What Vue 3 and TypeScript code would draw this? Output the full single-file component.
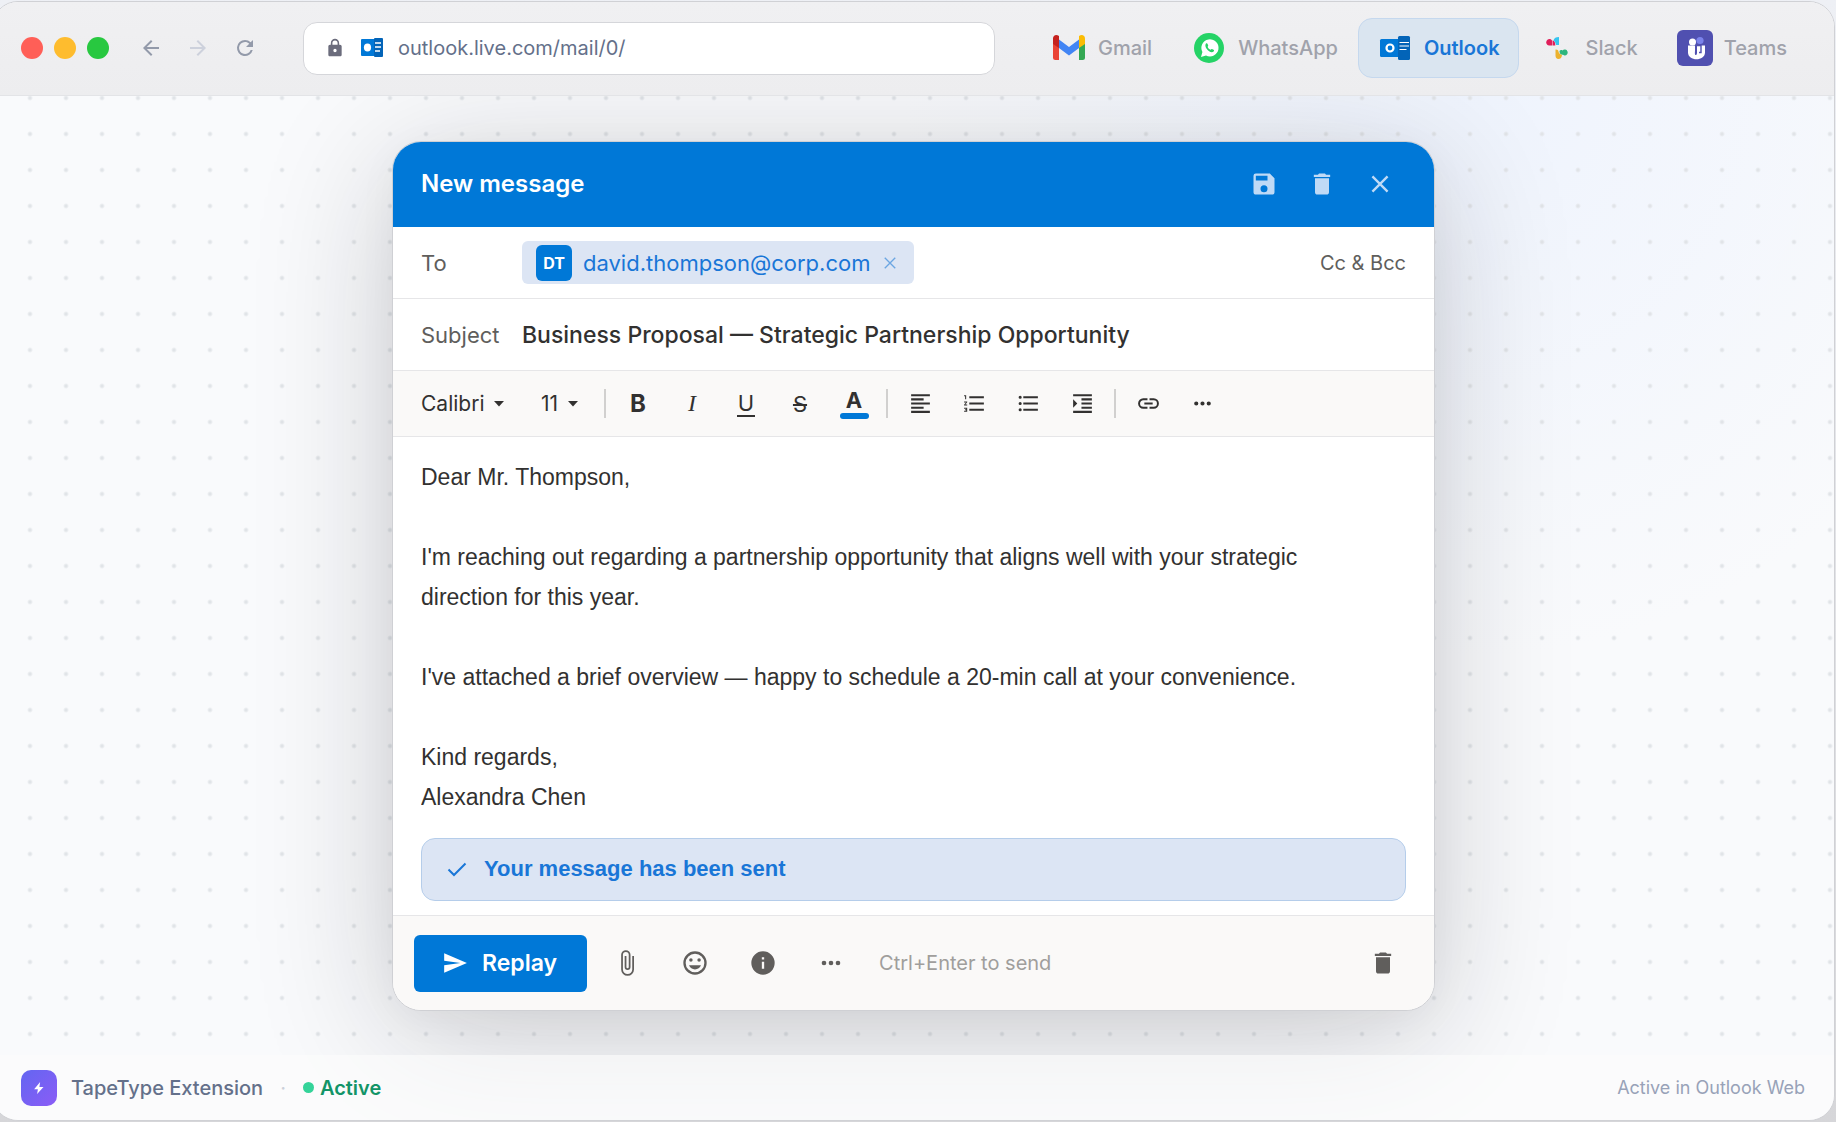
<script setup lang="ts">
import { ref } from 'vue'

interface Tab {
  id: string
  name: string
}

const tabs: Tab[] = [
  { id: 'gmail', name: 'Gmail' },
  { id: 'whatsapp', name: 'WhatsApp' },
  { id: 'outlook', name: 'Outlook' },
  { id: 'slack', name: 'Slack' },
  { id: 'teams', name: 'Teams' },
]
const activeTab = ref('outlook')

const icons: Record<string, string> = {
  back: 'M20 11H7.83l5.59-5.59L12 4l-8 8 8 8 1.41-1.41L7.83 13H20z',
  forward: 'M12 4l-1.41 1.41L16.17 11H4v2h12.17l-5.58 5.59L12 20l8-8z',
  reload: 'M17.65 6.35A7.96 7.96 0 0 0 12 4a8 8 0 1 0 7.73 10h-2.08A6 6 0 1 1 12 6c1.66 0 3.14.69 4.22 1.78L13 11h7V4z',
  lock: 'M18 8h-1V6c0-2.76-2.24-5-5-5S7 3.24 7 6v2H6c-1.1 0-2 .9-2 2v10c0 1.1.9 2 2 2h12c1.1 0 2-.9 2-2V10c0-1.1-.9-2-2-2zm-6 9a2 2 0 1 1 0-4 2 2 0 0 1 0 4zm3.1-9H8.9V6a3.1 3.1 0 0 1 6.2 0z',
  save: 'M17 3H5a2 2 0 0 0-2 2v14c0 1.1.9 2 2 2h14c1.1 0 2-.9 2-2V7zm-5 16a3 3 0 1 1 0-6 3 3 0 0 1 0 6zm3-10H5V5h10z',
  trash: 'M6 19c0 1.1.9 2 2 2h8c1.1 0 2-.9 2-2V7H6zM19 4h-3.5l-1-1h-5l-1 1H5v2h14z',
  align: 'M15 15H3v2h12zm0-8H3v2h12zM3 13h18v-2H3zm0 8h18v-2H3zM3 3v2h18V3z',
  numbered: 'M2 17h2v.5H3v1h1v.5H2v1h3v-4H2zm1-9h1V4H2v1h1zm-1 3h1.8L2 13.1v.9h3v-1H3.200L5 10.9V10H2zm5-6v2h14V5zm0 14h14v-2H7zm0-6h14v-2H7z',
  bulleted: 'M4 10.5a1.5 1.5 0 1 0 0 3 1.5 1.5 0 0 0 0-3zm0-6a1.5 1.5 0 1 0 0 3 1.5 1.5 0 0 0 0-3zm0 12a1.5 1.5 0 1 0 0 3 1.5 1.5 0 0 0 0-3zM7 19h14v-2H7zm0-6h14v-2H7zm0-8v2h14V5z',
  indent: 'M3 21h18v-2H3zM3 8v8l4-4zm8 9h10v-2H11zM3 3v2h18V3zm8 6h10V7H11zm0 4h10v-2H11z',
  link: 'M3.9 12c0-1.71 1.39-3.1 3.1-3.1h4V7H7a5 5 0 0 0 0 10h4v-1.9H7A3.1 3.1 0 0 1 3.9 12zM8 13h8v-2H8zm9-6h-4v1.9h4a3.1 3.1 0 0 1 0 6.2h-4V17h4a5 5 0 0 0 0-10z',
  more: 'M6 10a2 2 0 1 0 0 4 2 2 0 0 0 0-4zm12 0a2 2 0 1 0 0 4 2 2 0 0 0 0-4zm-6 0a2 2 0 1 0 0 4 2 2 0 0 0 0-4z',
  attach: 'M16.5 6v11.5a4 4 0 0 1-8 0V5a2.5 2.5 0 0 1 5 0v10.5a1 1 0 0 1-2 0V6H10v9.5a2.5 2.5 0 0 0 5 0V5a4 4 0 0 0-8 0v12.5a5.5 5.5 0 0 0 11 0V6z',
  emoji: 'M12 2a10 10 0 1 0 0 20 10 10 0 0 0 0-20zm0 18a8 8 0 1 1 0-16 8 8 0 0 1 0 16zm3.5-9a1.5 1.5 0 1 0 0-3 1.5 1.5 0 0 0 0 3zm-7 0a1.5 1.5 0 1 0 0-3 1.5 1.5 0 0 0 0 3zm3.5 6.5c2.33 0 4.31-1.46 5.11-3.5H6.89c.8 2.04 2.78 3.5 5.11 3.5z',
  info: 'M12 2a10 10 0 1 0 0 20 10 10 0 0 0 0-20zm1 15h-2v-6h2zm0-8h-2V7h2z',
  send: 'M2 21l21-9L2 3v7l15 2-15 2z',
}

const headerActions = [
  { icon: 'save', label: 'Save draft' },
  { icon: 'trash', label: 'Discard message' },
]
const paragraphTools = [
  { icon: 'align', label: 'Align left' },
  { icon: 'numbered', label: 'Numbered list' },
  { icon: 'bulleted', label: 'Bulleted list' },
  { icon: 'indent', label: 'Increase indent' },
]
const insertTools = [
  { icon: 'link', label: 'Insert link' },
  { icon: 'more', label: 'More formatting' },
]
const footerTools = [
  { icon: 'attach', label: 'Attach file' },
  { icon: 'emoji', label: 'Insert emoji' },
  { icon: 'info', label: 'Message info' },
  { icon: 'more', label: 'More options' },
]

const url = ref('outlook.live.com/mail/0/')
const font = ref('Calibri')
const fontSize = ref('11')
const subject = ref('Business Proposal — Strategic Partnership Opportunity')
const body = ref(`Dear Mr. Thompson,

I'm reaching out regarding a partnership opportunity that aligns well with your strategic direction for this year.

I've attached a brief overview — happy to schedule a 20-min call at your convenience.

Kind regards,
Alexandra Chen`)
</script>

<template>
  <div class="window">
    <header class="browser-bar">
      <div class="lights" aria-hidden="true">
        <span class="light red"></span><span class="light yellow"></span><span class="light green"></span>
      </div>
      <nav class="history" aria-label="History">
        <button type="button" aria-label="Back"><svg viewBox="0 0 24 24"><path :d="icons.back" /></svg></button>
        <button type="button" class="dim" aria-label="Forward"><svg viewBox="0 0 24 24"><path :d="icons.forward" /></svg></button>
        <button type="button" aria-label="Reload"><svg viewBox="0 0 24 24"><path :d="icons.reload" /></svg></button>
      </nav>
      <div class="address">
        <svg class="lock" viewBox="0 0 24 24"><path :d="icons.lock" /></svg>
        <svg class="favicon" viewBox="0 0 22 20">
          <rect y="1" width="16" height="17" rx="1" fill="#0078d7" />
          <rect x="13" width="9" height="19" rx="1" fill="#0364b8" />
          <ellipse cx="6.5" cy="9.5" rx="3.6" ry="4" fill="#fff" />
          <path d="M14 5h6M14 9h6M14 13h5" stroke="#fff" stroke-width="1.3" />
        </svg>
        <input v-model="url" type="text" aria-label="Address" />
      </div>
      <nav class="tabs" aria-label="Apps">
        <button
          v-for="tab in tabs"
          :key="tab.id"
          type="button"
          class="tab"
          :class="{ active: tab.id === activeTab }"
          @click="activeTab = tab.id"
        >
          <svg v-if="tab.id === 'gmail'" viewBox="0 0 36 36">
            <path d="M2 14h6v16H4.500A2.500 2.500 0 0 1 2 27.500z" fill="#ea4335" />
            <path d="M28 14h6v13.500a2.500 2.500 0 0 1-2.500 2.500H28z" fill="#34a853" />
            <path d="M8 9.500l10 7.500 10-7.500v8.500L18 25.500 8 18z" fill="#4285f4" />
            <path d="M2 8.500C2 5 5.500 4 8 6v12l-6-4z" fill="#c5221f" />
            <path d="M34 8.500C34 5 30.500 4 28 6v12l6-4z" fill="#fbbc04" />
          </svg>
          <svg v-else-if="tab.id === 'whatsapp'" viewBox="0 0 36 36">
            <circle cx="18" cy="18" r="15" fill="#25d366" />
            <path d="M10 27l1.400-5A8.600 8.600 0 1 1 15 25.500z" fill="#fff" />
            <path d="M14.800 13.700c.7-.7 1.500-.5 1.800.3l.6 1.500c.2.5-.7 1-.5 1.500.6 1.300 1.500 2.200 2.800 2.700.6.2 1-.8 1.500-.6l1.500.7c.8.4.7 1.200.1 1.700-3.400 2.800-10-4.300-7.800-7.800z" fill="#25d366" />
          </svg>
          <svg v-else-if="tab.id === 'outlook'" viewBox="0 0 36 36">
            <rect x="3" y="9" width="20" height="18" rx="1.5" fill="#0078d7" />
            <rect x="21" y="6" width="12" height="24" rx="1.5" fill="#0364b8" />
            <circle cx="13" cy="18" r="3.5" fill="none" stroke="#fff" stroke-width="2.2" />
            <path d="M22.500 12.500H32M22.500 16H32M22.500 19.500h7" stroke="#fff" stroke-width="1.2" />
          </svg>
          <svg v-else-if="tab.id === 'slack'" viewBox="0 0 36 36">
            <path d="M13 10.500a3.200 3.200 0 1 0-3 5h3zM13.500 10.500c2 0 2.800 1.500 2.800 5h-2.800z" fill="#e01e5a" />
            <path d="M20 7v8h-3c-.5-3-2-4-2.500-4.500C15 8 17 7 20 7z" fill="#36c5f0" />
            <path d="M25.500 25.500a3 3 0 1 0-2-5c-1-.8-2.500-.3-3 .5 0 2.500 1 4 3.500 3.800z" fill="#2eb67d" />
            <path d="M16.500 19.500c1.500-.2 3 .5 3 2 .2 2 2 3 3.500 3.500-.3 3-2 4-3.500 4-2 0-3-1.500-3-3.500z" fill="#ecb22e" />
          </svg>
          <svg v-else viewBox="0 0 36 36">
            <rect width="36" height="36" rx="6" fill="#5050b0" />
            <circle cx="23" cy="10.5" r="3.6" fill="#7b83eb" />
            <circle cx="15.500" cy="12" r="3.5" fill="#fff" />
            <path d="M11 15.500h7v5c0 2-.5 4.500.8 4.500 1.200 0 1.200-1.500 1.200-3v-6.500h8v7c0 9-17 9-17 0z" fill="#fff" />
            <path d="M19.500 15.500h4.500v7h-2" fill="none" stroke="#5050b0" stroke-width="1.4" />
          </svg>
          <span>{{ tab.name }}</span>
        </button>
      </nav>
    </header>

    <main class="stage">
      <form class="compose" @submit.prevent>
        <header class="compose-head">
          <h1>New message</h1>
          <div class="head-actions">
            <button v-for="a in headerActions" :key="a.icon" type="button" :aria-label="a.label">
              <svg viewBox="0 0 24 24"><path :d="icons[a.icon]" /></svg>
            </button>
            <button type="button" aria-label="Close">
              <svg viewBox="0 0 24 24"><path d="M5.500 5.500l13 13m0-13l-13 13" class="line" stroke-width="2" /></svg>
            </button>
          </div>
        </header>

        <div class="row">
          <span class="label">To</span>
          <span class="chip">
            <span class="avatar">DT</span>
            <span>david.thompson@corp.com</span>
            <button type="button" aria-label="Remove david.thompson@corp.com">
              <svg viewBox="0 0 24 24"><path d="M5 5l14 14m0-14L5 19" class="line" stroke-width="1.8" /></svg>
            </button>
          </span>
          <button type="button" class="cc">Cc &amp; Bcc</button>
        </div>

        <div class="row">
          <label class="label" for="subject">Subject</label>
          <input id="subject" v-model="subject" class="subject" type="text" />
        </div>

        <div class="toolbar" role="toolbar" aria-label="Formatting">
          <span class="picker font">
            <select v-model="font" aria-label="Font">
              <option>Calibri</option>
            </select>
            <svg viewBox="0 0 10 6"><path d="M0 0h10L5 5.500z" /></svg>
          </span>
          <span class="picker">
            <select v-model="fontSize" aria-label="Font size">
              <option>11</option>
            </select>
            <svg viewBox="0 0 10 6"><path d="M0 0h10L5 5.500z" /></svg>
          </span>
          <span class="divider"></span>
          <button type="button" class="tool bold" aria-label="Bold">B</button>
          <button type="button" class="tool italic" aria-label="Italic">I</button>
          <button type="button" class="tool" aria-label="Underline"><span class="under">U</span></button>
          <button type="button" class="tool strike" aria-label="Strikethrough">S</button>
          <button type="button" class="tool" aria-label="Font colour"><span class="colour">A</span></button>
          <span class="divider"></span>
          <button v-for="t in paragraphTools" :key="t.icon" type="button" class="tool" :aria-label="t.label">
            <svg viewBox="0 0 24 24"><path :d="icons[t.icon]" /></svg>
          </button>
          <span class="divider"></span>
          <button v-for="t in insertTools" :key="t.icon" type="button" class="tool" :aria-label="t.label">
            <svg viewBox="0 0 24 24"><path :d="icons[t.icon]" /></svg>
          </button>
        </div>

        <div class="content">
          <textarea v-model="body" rows="9" aria-label="Message body" spellcheck="false"></textarea>
          <p class="sent" role="status">
            <svg viewBox="0 0 24 24"><path d="M3.500 12.500l5.500 5.500L20.500 6.500" class="line" stroke-width="2" /></svg>
            Your message has been sent
          </p>
        </div>

        <footer class="compose-foot">
          <button type="submit" class="replay">
            <svg viewBox="0 0 24 24"><path :d="icons.send" /></svg>
            Replay
          </button>
          <button v-for="t in footerTools" :key="t.icon" type="button" class="foot-tool" :aria-label="t.label">
            <svg viewBox="0 0 24 24"><path :d="icons[t.icon]" /></svg>
          </button>
          <span class="hint">Ctrl+Enter to send</span>
          <button type="button" class="foot-tool last" aria-label="Delete draft">
            <svg viewBox="0 0 24 24"><path :d="icons.trash" /></svg>
          </button>
        </footer>
      </form>
    </main>

    <footer class="status">
      <span class="brand">
        <svg viewBox="0 0 24 24"><path d="M13.500 4L5.500 13.500h5L9.500 20l8.500-9.500h-5.500z" /></svg>
      </span>
      <span class="product">TapeType Extension</span>
      <span class="sep">·</span>
      <span class="state">Active</span>
      <span class="where">Active in Outlook Web</span>
    </footer>
  </div>
</template>

<style>
body {
  background: linear-gradient(#eef0f5, #d6d6d9);
}
</style>

<style scoped>
* {
  box-sizing: border-box;
}
.window {
  display: flex;
  flex-direction: column;
  min-height: calc(100vh - 3px);
  margin: 1px 1px 2px -8px;
  overflow: hidden;
  border: 1px solid #d0d1d5;
  border-radius: 26px;
  background: #f9fafc;
  font-family: Inter, 'Liberation Sans', sans-serif;
  font-size: 20px;
}
button,
input,
select,
textarea {
  margin: 0;
  padding: 0;
  border: 0;
  outline: 0;
  background: none;
  color: inherit;
  font: inherit;
}
svg {
  display: block;
  flex: none;
  fill: currentColor;
}
.line {
  fill: none;
  stroke: currentColor;
}

.browser-bar {
  position: relative;
  display: flex;
  align-items: center;
  height: 94px;
  padding: 0 28px 1px;
  border-bottom: 1px solid #e3e4e7;
  background: linear-gradient(#f0f0f2, #ededef);
}
.lights {
  display: flex;
  gap: 11px;
}
.light {
  width: 22px;
  height: 22px;
  border-radius: 50%;
}
.red { background: #ff5f57; }
.yellow { background: #febc2e; }
.green { background: #28c840; }
.history {
  display: flex;
  gap: 23px;
  margin: 0 46px 0 30px;
  color: #939aaa;
}
.history svg {
  width: 24px;
  height: 24px;
}
.history .dim {
  color: #cdd1dc;
}
.address {
  display: flex;
  flex: 1;
  align-items: center;
  min-width: 0;
  height: 53px;
  padding: 0 24px 0 21px;
  border: 1px solid #d5d6da;
  border-radius: 14px;
  background: #fff;
  color: #64708a;
}
.lock {
  width: 20px;
  height: 20px;
  color: #6b6c7c;
}
.favicon {
  width: 22px;
  height: 20px;
  margin: 0 15px 0 16px;
}
.address input {
  flex: 1;
  min-width: 0;
}
.tabs {
  display: flex;
  gap: 1px;
  margin-left: 37px;
}
.tab {
  display: flex;
  align-items: center;
  gap: 11px;
  height: 60px;
  padding: 0 18px;
  border: 1px solid transparent;
  border-radius: 14px;
  color: #a0a2ab;
  font-weight: 500;
}
.tab svg {
  width: 36px;
  height: 36px;
}
.tab.active {
  border-color: #c5d8ee;
  background: #dae5f0;
  color: #1976d7;
  font-weight: 600;
}

.stage {
  flex: 1;
  padding: 45px 32px 44px;
  background:
    radial-gradient(circle, #e1e4e8 1px, transparent 3px) 19px -16px / 36px 36px,
    radial-gradient(circle at 80% 0, rgba(226, 236, 255, 0.45), transparent 32%),
    #f9fafc;
}
.compose {
  max-width: 1043px;
  margin: 0 auto;
  overflow: hidden;
  border: 1px solid #cfd0d4;
  border-radius: 29px;
  background: #fff;
  box-shadow:
    0 24px 140px rgba(20, 20, 30, 0.2),
    0 8px 40px rgba(20, 20, 30, 0.04);
  color: #323130;
}
.compose-head {
  display: flex;
  align-items: center;
  justify-content: space-between;
  height: 85px;
  padding: 0 40px 2px 28px;
  background: #0078d7;
}
.compose-head h1 {
  margin: 0;
  color: #fff;
  font-size: 24px;
  font-weight: 600;
}
.head-actions {
  display: flex;
  gap: 30px;
  color: #bfdaf6;
}
.head-actions svg {
  width: 28px;
  height: 28px;
}
.row {
  display: flex;
  align-items: center;
  height: 72px;
  padding: 0 28px;
  border-bottom: 1px solid #e6e6e8;
}
.label {
  width: 101px;
  color: #605e5c;
  font-size: 22px;
}
.chip {
  display: flex;
  align-items: center;
  height: 43px;
  padding: 0 15px 0 14px;
  border-radius: 6px;
  background: #dce5f4;
  color: #1976d7;
  font-size: 22px;
}
.avatar {
  display: flex;
  align-items: center;
  justify-content: center;
  width: 36px;
  height: 36px;
  margin-right: 11px;
  border-radius: 6px;
  background: #0078d7;
  color: #fff;
  font-size: 16px;
  font-weight: 700;
}
.chip button {
  margin-left: 11px;
  color: #6ba6e2;
}
.chip svg {
  width: 18px;
  height: 18px;
}
.cc {
  margin-left: auto;
  color: #605e5c;
}
.subject {
  flex: 1;
  min-width: 0;
  font-size: 23px;
  font-weight: 500;
}
.toolbar {
  display: flex;
  align-items: center;
  height: 66px;
  padding: 0 28px;
  border-bottom: 1px solid #e6e6e8;
  background: #faf9f8;
}
.picker {
  display: flex;
  align-items: center;
  gap: 9px;
  font-size: 21px;
}
.picker.font {
  margin-right: 37px;
}
.picker select {
  appearance: none;
}
.picker svg {
  width: 10px;
  height: 6px;
}
.divider {
  flex: none;
  width: 2px;
  height: 29px;
  margin: 0 5px;
  background: #d1d0cf;
}
.picker + .divider {
  margin-left: 26px;
}
.tool {
  display: flex;
  align-items: center;
  justify-content: center;
  width: 54px;
  height: 54px;
  font-size: 22px;
}
.tool svg {
  width: 25px;
  height: 25px;
}
.bold {
  font-size: 24px;
  font-weight: 700;
}
.italic {
  font-family: 'Liberation Serif', serif;
  font-size: 24px;
  font-style: italic;
}
.under {
  padding: 0 1px;
  border-bottom: 2px solid #323130;
  line-height: 24px;
}
.strike {
  text-decoration: line-through;
}
.colour {
  font-weight: 700;
  line-height: 25px;
}
.colour::after {
  display: block;
  width: 29px;
  height: 6px;
  border-radius: 3px;
  background: #0078d7;
  content: '';
}
.content {
  padding: 20px 28px 14px;
  font-family: 'Liberation Sans', sans-serif;
}
.content textarea {
  display: block;
  width: 100%;
  height: 360px;
  padding-right: 24px;
  overflow: hidden;
  resize: none;
  font-size: 23px;
  line-height: 40px;
}
.sent {
  display: flex;
  align-items: center;
  gap: 15px;
  height: 63px;
  margin: 21px 0 0;
  padding: 0 23px 2px;
  border: 1px solid #b5cdea;
  border-radius: 14px;
  background: #dce5f4;
  color: #1976d7;
  font-size: 22px;
  font-weight: 700;
}
.sent svg {
  width: 24px;
  height: 24px;
}
.compose-foot {
  display: flex;
  align-items: center;
  height: 95px;
  padding: 0 17px 0 21px;
  border-top: 1px solid #e6e6e8;
  background: #faf9f8;
  color: #605e5c;
}
.replay {
  display: flex;
  align-items: center;
  gap: 14px;
  height: 57px;
  margin-right: 6px;
  padding: 0 30px 0 28px;
  border-radius: 6px;
  background: #0078d7;
  color: #fff;
  font-size: 23px;
  font-weight: 600;
}
.replay svg {
  width: 26px;
  height: 26px;
}
.foot-tool {
  display: flex;
  align-items: center;
  justify-content: center;
  width: 68px;
  height: 57px;
}
.foot-tool svg {
  width: 28px;
  height: 28px;
}
.hint {
  margin-left: 14px;
  color: #a09e9c;
}
.last {
  margin-left: auto;
}

.status {
  position: relative;
  display: flex;
  align-items: center;
  height: 65px;
  padding: 0 29px 0 28px;
  background: rgba(252, 252, 252, 0.65);
}
.brand {
  display: flex;
  align-items: center;
  justify-content: center;
  width: 36px;
  height: 36px;
  border-radius: 10px;
  background: linear-gradient(135deg, #6366f1, #8b5cf6);
  color: #fff;
}
.brand svg {
  width: 18px;
  height: 18px;
}
.product {
  margin-left: 14px;
  color: #64708a;
  font-weight: 500;
}
.sep {
  margin: 0 17px;
  color: #cbd0da;
}
.state {
  display: flex;
  align-items: center;
  gap: 6px;
  color: #129467;
  font-weight: 600;
}
.state::before {
  width: 11px;
  height: 11px;
  border-radius: 50%;
  background: #34d399;
  content: '';
}
.where {
  margin-left: auto;
  color: #98a2b8;
  font-size: 18px;
}
</style>
